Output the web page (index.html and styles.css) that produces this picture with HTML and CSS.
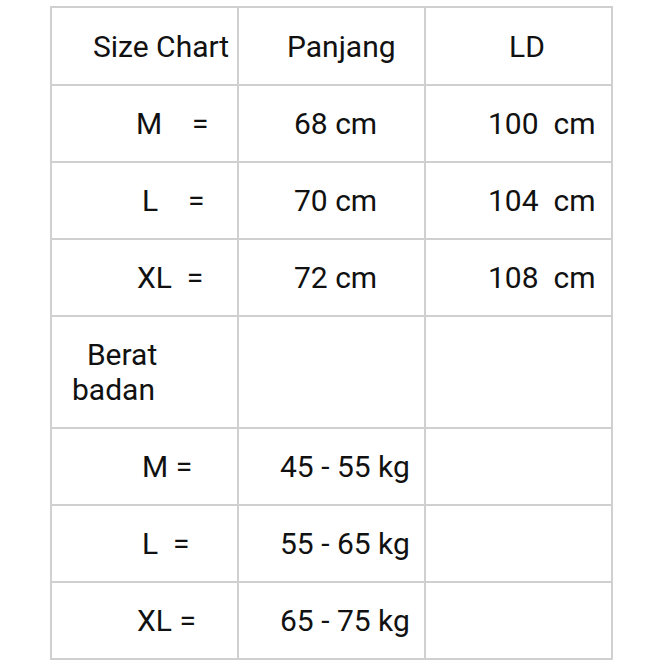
FILE: index.html
```html
<!DOCTYPE html>
<html lang="id">
<head>
<meta charset="utf-8">
<title>Size Chart</title>
<link rel="stylesheet" href="styles.css">
</head>
<body>
<div class="chart">
  <div class="cell p41">Size Chart</div>
  <div class="cell p48">Panjang</div>
  <div class="cell p83">LD</div>

  <div class="cell p84">M    =</div>
  <div class="cell p55">68 cm</div>
  <div class="cell p62">100  cm</div>

  <div class="cell p90">L    =</div>
  <div class="cell p55">70 cm</div>
  <div class="cell p62">104  cm</div>

  <div class="cell p85">XL  =</div>
  <div class="cell p55">72 cm</div>
  <div class="cell p62">108  cm</div>

  <div class="cell p20 multi">  Berat
badan</div>
  <div class="cell"></div>
  <div class="cell"></div>

  <div class="cell p90">M =</div>
  <div class="cell p41">45 - 55 kg</div>
  <div class="cell"></div>

  <div class="cell p90">L  =</div>
  <div class="cell p41">55 - 65 kg</div>
  <div class="cell"></div>

  <div class="cell p85">XL =</div>
  <div class="cell p41">65 - 75 kg</div>
  <div class="cell"></div>
</div>
</body>
</html>
```
FILE: styles.css
```css
html, body {
  margin: 0;
  padding: 0;
  background: #ffffff;
}

body {
  font-family: Roboto, "Liberation Sans", sans-serif;
  font-size: 30px;
  color: #111111;
}

.chart {
  margin: 6px 0 0 50px;
  width: 563px;
  box-sizing: border-box;
  display: grid;
  grid-template-columns: 185px 185px 185px;
  grid-template-rows: 76px 75px 75px 75px 110px 75px 75px 75px;
  gap: 2px;
  padding: 2px;
  background: #d0d0d0;
}

.cell {
  background: #ffffff;
  display: flex;
  align-items: center;
  white-space: pre;
  line-height: normal;
}

.multi {
  line-height: 35px;
}

.p20 { padding-left: 20px; }
.p41 { padding-left: 41px; }
.p48 { padding-left: 48px; }
.p55 { padding-left: 55px; }
.p62 { padding-left: 62px; }
.p83 { padding-left: 83px; }
.p84 { padding-left: 84px; }
.p85 { padding-left: 85px; }
.p90 { padding-left: 90px; }
```
